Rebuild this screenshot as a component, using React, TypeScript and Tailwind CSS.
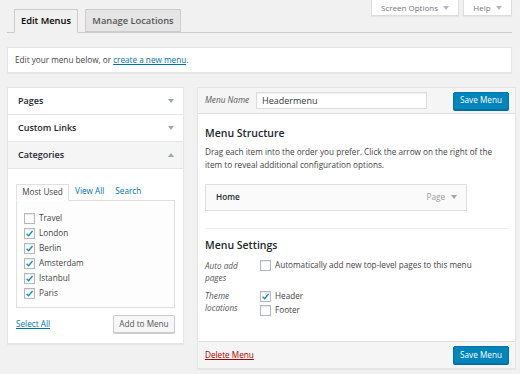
import React from "react";

const Check = ({ checked }: { checked: boolean }) => (
  <span className="flex h-[11px] w-[11px] shrink-0 items-center justify-center border border-[#b4b9be] bg-white shadow-[inset_0_1px_2px_rgba(0,0,0,0.1)]">
    {checked && (
      <svg viewBox="0 0 10 10" className="h-[9px] w-[9px]">
        <path d="M1.8 5.2 L4 7.4 L8.4 2.2" fill="none" stroke="#1e8cbe" strokeWidth="1.6" />
      </svg>
    )}
  </span>
);

const Down = ({ color = "#a0a5aa" }: { color?: string }) => (
  <svg viewBox="0 0 6 4" className="h-[4px] w-[6px]">
    <path d="M0 0 L6 0 L3 4 Z" fill={color} />
  </svg>
);
const Up = () => (
  <svg viewBox="0 0 6 4" className="h-[4px] w-[6px]">
    <path d="M0 4 L6 4 L3 0 Z" fill="#a0a5aa" />
  </svg>
);

export default function App() {
  const cats: [string, boolean][] = [
    ["Travel", false],
    ["London", true],
    ["Berlin", true],
    ["Amsterdam", true],
    ["Istanbul", true],
    ["Paris", true],
  ];
  return (
    <div
      className="h-[374px] w-[520px] overflow-hidden bg-[#f1f1f1] text-[8.2px] text-[#444]"
      style={{ fontFamily: '"Open Sans", "Noto Sans", sans-serif' }}
    >
      {/* top: tabs + screen options */}
      <div className="ml-[7px] mr-[8px] flex h-[33px] items-start justify-between border-b border-[#ccc]">
        <div className="ml-[7px] mt-[9px] flex gap-[7px]">
          <div className="-mb-px flex h-[24px] w-[64px] items-center justify-center border border-b-[#f1f1f1] border-[#ccc] bg-[#f1f1f1] text-[9.3px] font-semibold text-[#000]">
            Edit Menus
          </div>
          <div className="flex h-[23px] w-[96px] items-center justify-center border border-[#ccc] bg-[#e5e5e5] text-[9.3px] font-semibold text-[#555]">
            Manage Locations
          </div>
        </div>
        <div className="flex gap-[4px]">
          <div className="flex h-[16px] w-[88px] items-center justify-center gap-[5px] border border-t-0 border-[#ddd] bg-white text-[8px] text-[#72777c] shadow-[0_1px_1px_rgba(0,0,0,0.04)]">
            Screen Options <Down color="#b4b9be" />
          </div>
          <div className="flex h-[16px] w-[49px] items-center justify-center gap-[5px] border border-t-0 border-[#ddd] bg-white text-[8px] text-[#72777c] shadow-[0_1px_1px_rgba(0,0,0,0.04)]">
            Help <Down color="#b4b9be" />
          </div>
        </div>
      </div>

      {/* notice */}
      <div className="ml-[7px] mr-[8px] mt-[14px] flex h-[26px] items-center border border-[#e5e5e5] bg-white px-[7px] shadow-[0_1px_1px_rgba(0,0,0,0.04)]">
        <span>
          Edit your menu below, or{" "}
          <span className="text-[#0073aa] underline">create a new menu</span>.
        </span>
      </div>

      {/* main */}
      <div className="ml-[7px] mt-[14px] flex gap-[13px]">
        {/* left column */}
        <div className="w-[177px] self-start border border-[#e5e5e5] bg-white shadow-[0_1px_1px_rgba(0,0,0,0.04)]">
          <div className="flex h-[27px] items-center justify-between border-b border-[#e5e5e5] pl-[10px] pr-[9px] text-[9px] font-semibold text-[#23282d]">
            Pages <Down />
          </div>
          <div className="flex h-[27px] items-center justify-between border-b border-[#e5e5e5] pl-[10px] pr-[9px] text-[9px] font-semibold text-[#23282d]">
            Custom Links <Down />
          </div>
          <div className="flex h-[27px] items-center justify-between border-b border-[#e5e5e5] bg-[#f5f5f5] pl-[10px] pr-[9px] text-[9px] font-semibold text-[#23282d]">
            Categories <Up />
          </div>
          <div className="px-[8px] pb-[10px] pt-[15px]">
            <div className="flex items-end">
              <div className="-mb-px flex h-[17px] w-[53px] items-center justify-center border border-b-white border-[#dfdfdf] bg-white">
                Most Used
              </div>
              <span className="ml-[6px] pb-[3px] text-[#0073aa]">View All</span>
              <span className="ml-[11px] pb-[3px] text-[#0073aa]">Search</span>
            </div>
            <div className="flex h-[108px] flex-col border border-[#dfdfdf] bg-[#fdfdfd] pl-[7px] pt-[10px]">
              {cats.map(([n, c]) => (
                <div key={n} className="flex h-[15px] items-center gap-[4px]">
                  <Check checked={c} />
                  <span>{n}</span>
                </div>
              ))}
            </div>
            <div className="mt-[7px] flex items-center justify-between">
              <span className="text-[#0073aa] underline">Select All</span>
              <div className="flex h-[18px] w-[62px] items-center justify-center rounded-[2px] border border-[#ccc] bg-[#f7f7f7] text-[#555] shadow-[0_1px_0_#ccc]">
                Add to Menu
              </div>
            </div>
          </div>
        </div>

        {/* right column */}
        <div className="flex h-[282px] w-[319px] flex-col border border-[#e5e5e5] bg-white shadow-[0_1px_1px_rgba(0,0,0,0.04)]">
          <div className="flex h-[26px] shrink-0 items-center border-b border-[#dfdfdf] bg-[#f5f5f5] pl-[7px] pr-[6px]">
            <span className="italic text-[#555]">Menu Name</span>
            <div className="ml-[7px] flex h-[17px] w-[171px] items-center border border-[#ddd] bg-white px-[5px] text-[9px] text-[#32373c] shadow-[inset_0_1px_2px_rgba(0,0,0,0.07)]">
              Headermenu
            </div>
            <div className="ml-auto flex h-[18px] w-[56px] items-center justify-center rounded-[2px] border border-[#0073aa] bg-[#0085ba] text-white shadow-[0_1px_0_#006799]">
              Save Menu
            </div>
          </div>
          <div className="flex-1 px-[7px]">
            <div className="mt-[12px] text-[10.5px] font-semibold text-[#23282d]">Menu Structure</div>
            <div className="mt-[3px] leading-[13px]">
              Drag each item into the order you prefer. Click the arrow on the right of the
              <br />
              item to reveal additional configuration options.
            </div>
            <div className="mt-[13px] flex h-[27px] w-[262px] items-center justify-between border border-[#dfdfdf] bg-[#fafafa] pl-[10px] pr-[9px]">
              <span className="font-semibold text-[#23282d]">Home</span>
              <span className="flex items-center gap-[6px] text-[#999]">
                Page <Down />
              </span>
            </div>
            <div className="mt-[17px] border-t border-[#eee]" />
            <div className="mt-[9px] text-[10.5px] font-semibold text-[#23282d]">Menu Settings</div>
            <div className="mt-[6px] flex">
              <div className="w-[55px] italic leading-[12px] text-[#555]">
                Auto add
                <br />
                pages
              </div>
              <div className="flex h-[12px] items-center gap-[4px]">
                <Check checked={false} />
                <span>Automatically add new top-level pages to this menu</span>
              </div>
            </div>
            <div className="mt-[6px] flex">
              <div className="w-[55px] italic leading-[12px] text-[#555]">
                Theme
                <br />
                locations
              </div>
              <div className="flex flex-col">
                <div className="flex h-[14px] items-center gap-[4px]">
                  <Check checked={true} />
                  <span>Header</span>
                </div>
                <div className="flex h-[14px] items-center gap-[4px]">
                  <Check checked={false} />
                  <span>Footer</span>
                </div>
              </div>
            </div>
          </div>
          <div className="flex h-[27px] shrink-0 items-center justify-between border-t border-[#dfdfdf] bg-[#f5f5f5] pl-[7px] pr-[6px]">
            <span className="text-[#a00] underline">Delete Menu</span>
            <div className="flex h-[18px] w-[56px] items-center justify-center rounded-[2px] border border-[#0073aa] bg-[#0085ba] text-white shadow-[0_1px_0_#006799]">
              Save Menu
            </div>
          </div>
        </div>
      </div>
    </div>
  );
}
